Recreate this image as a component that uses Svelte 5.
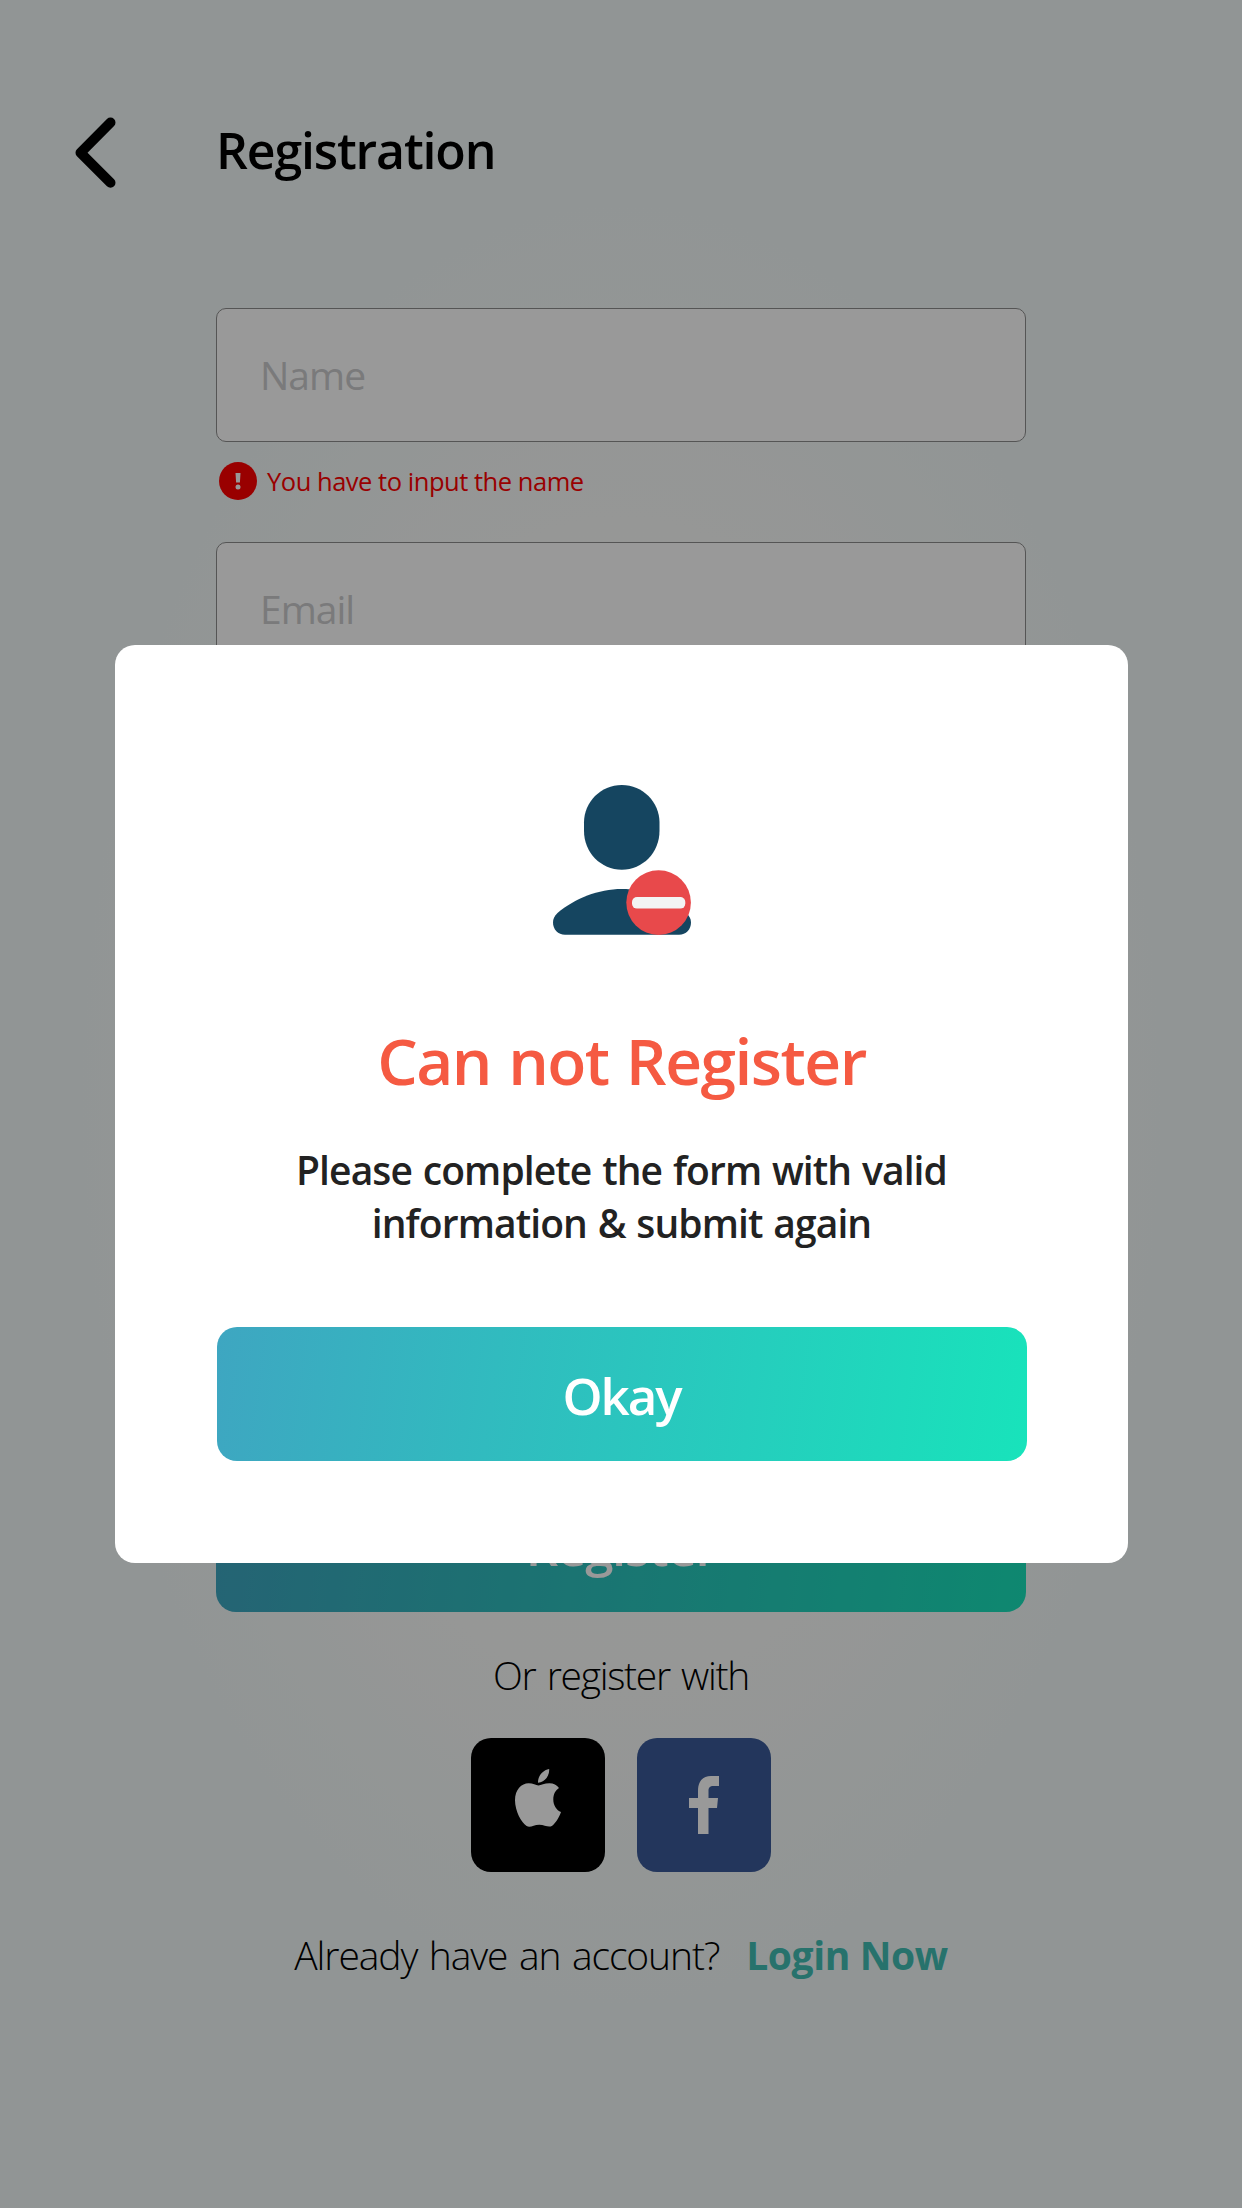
<script>
  const fields = [
    { label: 'Name', error: 'You have to input the name' },
    { label: 'Email' }
  ];
</script>

<main class="screen">
  <header>
    <svg class="back" viewBox="0 0 41 72" aria-label="Back">
      <path d="M35.5 5.500 5.500 35.800l30 30" />
    </svg>
    <h1>Registration</h1>
  </header>

  <form>
    {#each fields as field}
      <div class="field">
        <div class="input">{field.label}</div>
        {#if field.error}
          <div class="error">
            <svg viewBox="0 0 38 38">
              <circle cx="19" cy="19" r="19" fill="#f00" />
              <path d="M16.500 11h5l-.6 9.600h-3.800z" fill="#fff" />
              <circle cx="19" cy="24.900" r="2.500" fill="#fff" />
            </svg>
            <span>{field.error}</span>
          </div>
        {/if}
      </div>
    {/each}
  </form>

  <div class="button register">Register</div>
  <p class="or">Or register with</p>
  <div class="socials">
    <div class="tile apple">
      <svg viewBox="0 0 46 58">
        <path d="M34.2 0C34.6 7.2 29.7 13.2 23 13.7 22.7 7.2 27.8 1 34.2 0Z" />
        <path d="M23.4 16.4c2.6 0 6-2.2 11-2.2 4.200 0 7.400 1.900 9.600 4.900-3.500 2.100-5.700 6.100-5.700 11.300 0 6 3.200 10.700 7.700 12.600-1.700 5.100-5.600 11.400-8.800 13.700-3.600 2.500-7.200-.9-13-.9-5.600 0-9 3.400-12.600 1.200C6.400 53.800 0 42 0 31.300 0 20.600 6.500 14.300 13.600 14.300c4.400 0 7.400 2.100 9.800 2.100Z" />
      </svg>
    </div>
    <div class="tile facebook">
      <svg viewBox="0 0 30 58">
        <path d="M9 58V32H0V22h9v-7C9 5 14 0 22 0h8v10h-5.500C20.800 10 19.500 11.500 19.500 15v7H29l-1 10h-8.500v26z" />
      </svg>
    </div>
  </div>
  <p class="login"><span>Already have an account?</span><strong>Login Now</strong></p>

  <div class="overlay">
    <section class="modal">
      <svg class="person" viewBox="0 0 138 150">
        <path d="M68.800 0c21 0 37.700 17 37.700 37.500v8.500c0 21.500-16.700 38.700-37.700 38.700S31 67.500 31 46v-8.500C31 17 47.800 0 68.800 0Z" fill="#154560" />
        <path d="M12 149.700c-7 0-12-5.200-12-12.200 0-4 1.500-6.500 4.500-9.500 17-14.500 41-24 64.300-24s47.500 9.500 64.500 24c3 3 4.700 5.500 4.700 9.500 0 7-5 12.200-12 12.200z" fill="#154560" />
        <circle cx="105.600" cy="117.600" r="32.300" fill="#e8494b" />
        <rect x="79" y="112" width="53.300" height="11.600" rx="5" fill="#f3f4f4" />
      </svg>
      <h2>Can not Register</h2>
      <p class="message">Please complete the form with valid<br />information &amp; submit again</p>
      <div class="button okay">Okay</div>
    </section>
  </div>
</main>

<style>
  :global(body) { margin: 0; }
  .screen {
    position: relative;
    box-sizing: border-box;
    width: 1242px;
    height: 2208px;
    overflow: hidden;
    padding: 100px 216px 0;
    display: flex;
    flex-direction: column;
    background: radial-gradient(540px 900px, #fefefc 0%, #fafcfa 65%, #f2f9f9 100%);
    font-family: 'Open Sans', 'Noto Sans', sans-serif;
    color: #000;
    white-space: nowrap;
  }
  h1, h2, p { margin: 0; font-weight: 600; }
  header {
    display: flex;
    align-items: center;
    height: 100px;
    margin-left: -141px;
  }
  .back { width: 41px; height: 72px; margin: 5px 100px 0 0; }
  .back path { fill: none; stroke: #000; stroke-width: 10; stroke-linecap: round; stroke-linejoin: round; }
  h1 { font-size: 50px; line-height: 100px; letter-spacing: -1.15px; }
  form { height: 1170px; margin-top: 108px; }
  .field { height: 234px; }
  .input {
    box-sizing: border-box;
    width: 810px;
    height: 134px;
    padding: 0 43px;
    line-height: 131px;
    border: 1px solid #8e8e8e;
    border-radius: 10px;
    background: #fff;
    color: #cbcbcd;
    font-size: 39px;
    letter-spacing: -1px;
  }
  .error {
    display: flex;
    align-items: center;
    gap: 10px;
    margin: 20px 0 0 3px;
    height: 38px;
    line-height: 40px;
    color: #f00;
    font-size: 25.500px;
    letter-spacing: -.47px;
  }
  .error svg { width: 38px; height: 38px; }
  .button {
    height: 134px;
    line-height: 137px;
    border-radius: 20px;
    text-align: center;
    color: #fff;
    font-size: 51px;
    font-weight: 600;
    letter-spacing: -1.300px;
    background: linear-gradient(98deg, #3ea6c1 0%, #18e3bb 100%);
  }
  .or {
    height: 123px;
    line-height: 125px;
    text-align: center;
    font-size: 39px;
    font-weight: 300;
    letter-spacing: -1.300px;
    word-spacing: 2.500px;
  }
  .socials { display: flex; justify-content: center; gap: 32px; margin-top: 3px; }
  .tile {
    display: flex;
    align-items: center;
    justify-content: center;
    width: 134px;
    height: 134px;
    border-radius: 20px;
  }
  .tile svg { fill: #fff; }
  .apple { background: #000; }
  .apple svg { width: 46px; height: 58px; margin-bottom: 15px; }
  .facebook { background: #3b5b99; }
  .facebook svg { width: 30px; height: 58px; }
  .login {
    display: flex;
    justify-content: center;
    gap: 27px;
    height: 60px;
    line-height: 62px;
    margin-top: 52px;
    font-size: 39px;
    font-weight: 300;
    letter-spacing: -1.100px;
    word-spacing: 2.500px;
  }
  .login strong { color: #41bfb4; font-weight: 700; letter-spacing: -.4px; word-spacing: 0; }
  .overlay {
    position: absolute;
    inset: 0;
    display: flex;
    align-items: center;
    justify-content: center;
    background: rgba(0, 0, 0, .4);
  }
  .modal {
    box-sizing: border-box;
    width: 1013px;
    height: 918px;
    padding: 140px 101px 0 102px;
    border-radius: 20px;
    background: #fff;
    text-align: center;
  }
  .person { display: block; width: 138px; height: 150px; margin: 0 auto; }
  h2 { margin-top: 86px; font-size: 64px; line-height: 80px; letter-spacing: -1.500px; word-spacing: 2px; color: #f55a42; }
  .message {
    margin-top: 42px;
    height: 106px;
    font-size: 39px;
    line-height: 53px;
    letter-spacing: -.9px;
    word-spacing: 1.500px;
    color: #222;
  }
  .okay { margin-top: 78px; letter-spacing: -2px; }
</style>
